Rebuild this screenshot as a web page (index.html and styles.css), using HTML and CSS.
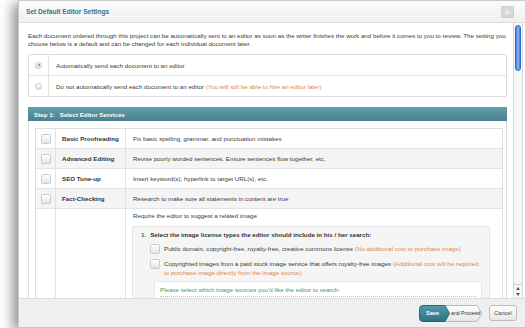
FILE: index.html
```html
<!DOCTYPE html>
<html>
<head>
    <title>Set Default Editor Settings</title>
    <meta charset="UTF-8">
    <link rel="stylesheet" href="styles.css">
</head>
<body class="page">
    <div class="dialog">
        <div class="dialog-head">
            <span class="dialog-title">Set Default Editor Settings</span>
            <span class="close-btn">x</span>
        </div>

        <div class="dialog-body">
            <div class="scroll-content">
                <p class="intro">Each document ordered through this project can be automatically sent to an editor as soon as the writer finishes the work and before it comes to you to review. The setting you choose below is a default and can be changed for each individual document later.</p>

                <div class="radio-box">
                    <div class="radio-row">
                        <div class="radio-cell"><span class="radio checked"></span></div>
                        <div class="radio-label"><span>Automatically send each document to an editor</span></div>
                    </div>
                    <div class="radio-row">
                        <div class="radio-cell"><span class="radio"></span></div>
                        <div class="radio-label"><span>Do not automatically send each document to an editor <span class="note">(You will still be able to hire an editor later)</span></span></div>
                    </div>
                </div>

                <div class="step-bar">Step 1:&nbsp;&nbsp; Select Editor Services</div>
                <div class="step-body">
                    <div class="services">
                        <div class="service">
                            <div class="check-cell"><span class="checkbox"></span></div>
                            <div class="service-name">Basic Proofreading</div>
                            <div class="service-desc">Fix basic spelling, grammar, and punctuation mistakes</div>
                        </div>
                        <div class="service alt">
                            <div class="check-cell"><span class="checkbox"></span></div>
                            <div class="service-name">Advanced Editing</div>
                            <div class="service-desc">Revise poorly worded sentences. Ensure sentences flow together, etc.</div>
                        </div>
                        <div class="service">
                            <div class="check-cell"><span class="checkbox"></span></div>
                            <div class="service-name">SEO Tune-up</div>
                            <div class="service-desc">Insert keyword(s), hyperlink to target URL(s), etc.</div>
                        </div>
                        <div class="service alt">
                            <div class="check-cell"><span class="checkbox"></span></div>
                            <div class="service-name">Fact-Checking</div>
                            <div class="service-desc">Research to make sure all statements in content are true</div>
                        </div>
                        <div class="service tall">
                            <div class="check-cell"></div>
                            <div class="service-name"></div>
                            <div class="service-desc">
                                <div class="image-title">Require the editor to suggest a related image</div>
                                <div class="license-box">
                                    <div class="license-head"><span class="num">1.</span>Select the image license types the editor should include in his / her search:</div>
                                    <div class="license-opt">
                                        <span class="checkbox"></span>
                                        <span>Public domain, copyright-free, royalty-free, creative commons license <span class="note">(No additional cost to purchase image)</span></span>
                                    </div>
                                    <div class="license-opt">
                                        <span class="checkbox"></span>
                                        <span>Copyrighted images from a paid stock image service that offers royalty-free images <span class="note">(Additional cost will be required to purchase image directly from the image source)</span></span>
                                    </div>
                                    <div class="source-box">
                                        <div class="source-title">Please select which image sources you'd like the editor to search:</div>
                                    </div>
                                </div>
                            </div>
                        </div>
                    </div>
                </div>
            </div>

            <div class="scrollbar">
                <div class="thumb"></div>
                <div class="track"></div>
                <div class="arrows">
                    <span class="arrow up"></span>
                    <span class="arrow down"></span>
                </div>
            </div>
        </div>

        <div class="dialog-foot">
            <div class="proceed-btn">
                <svg class="proceed-shape" width="64" height="17" viewBox="0 0 64 17">
                    <defs>
                        <linearGradient id="lightGrad" x1="0" y1="0" x2="0" y2="1">
                            <stop offset="0" stop-color="#ffffff"/>
                            <stop offset="1" stop-color="#e4e4e4"/>
                        </linearGradient>
                        <linearGradient id="tealGrad" x1="0" y1="0" x2="0" y2="1">
                            <stop offset="0" stop-color="#4f9bab"/>
                            <stop offset="1" stop-color="#2d7283"/>
                        </linearGradient>
                    </defs>
                    <path d="M20 0.5 H58 L63 8.5 L58 16.5 H20 Z" fill="url(#lightGrad)" stroke="#b9b9b9"/>
                    <path d="M4 0.5 H26 L30.5 8.5 L26 16.5 H4 Q0.5 16.5 0.5 13 V4 Q0.5 0.5 4 0.5 Z" fill="url(#tealGrad)" stroke="#2a6676"/>
                </svg>
                <span class="save-label">Save</span>
                <span class="proceed-label">and Proceed</span>
            </div>
            <button class="cancel-btn">Cancel</button>
        </div>
    </div>
</body>
</html>
```

FILE: styles.css
```css
.page{
margin: 0;
background: #ffffff;
font-family: "Liberation Sans", Arial, sans-serif;
font-size: 6.2px;
color: #3a3a3a;
overflow: hidden;
height: 328px;
}

.dialog{
margin-left: 18px;
width: 506px;
height: 326px;
border: 1px solid #c9c9c9;
background: #fff;
box-shadow: -5px 3px 12px rgba(0,0,0,0.45);
display: flex;
flex-direction: column;
}

.dialog-head{
height: 21px;
flex: none;
display: flex;
align-items: center;
justify-content: space-between;
padding: 0 11px 0 7px;
background: linear-gradient(#fbfbfb, #f0f0f0);
border-bottom: 1px solid #dedede;
}

.dialog-title{
color: #2f7690;
font-weight: bold;
font-size: 6.6px;
}

.close-btn{
width: 11px;
height: 10px;
background: #d8d8d8;
border: 1px solid #cfcfcf;
border-radius: 1px;
color: #fff;
font-size: 6px;
font-weight: bold;
display: flex;
align-items: center;
justify-content: center;
}

.dialog-body{
flex: 1;
display: flex;
overflow: hidden;
}

.scroll-content{
flex: 1;
padding: 9px 6px 0 9px;
overflow: hidden;
}

.intro{
margin: 0;
line-height: 8px;
}

.radio-box{
margin-top: 6px;
border: 1px solid #dcdcdc;
border-radius: 2px;
}

.radio-row{
display: flex;
height: 20px;
}

.radio-row + .radio-row{
border-top: 1px solid #e2e2e2;
}

.radio-cell{
width: 19px;
border-right: 1px solid #e2e2e2;
display: flex;
align-items: center;
justify-content: center;
}

.radio{
width: 5px;
height: 5px;
border-radius: 50%;
border: 1px solid #c4c4c4;
background: linear-gradient(#fff, #e6e6e6);
position: relative;
}

.radio.checked::after{
content: "";
position: absolute;
left: 1.5px;
top: 1.5px;
width: 2px;
height: 2px;
border-radius: 50%;
background: #3a9a72;
}

.radio-label{
flex: 1;
display: flex;
align-items: center;
padding-left: 7px;
}

.note{
color: #d98a47;
}

.step-bar{
margin-top: 10px;
height: 14px;
display: flex;
align-items: center;
padding-left: 6px;
color: #fff;
font-weight: bold;
background: linear-gradient(#629fac, #4b808d);
}

.step-body{
border-left: 1px solid #dedede;
border-right: 1px solid #dedede;
padding: 7px 3px 0 6px;
}

.services{
border: 1px solid #dedede;
border-bottom: none;
}

.service{
display: flex;
height: 19px;
border-bottom: 1px solid #e4e4e4;
}

.service.alt{
background: #f4f4f4;
}

.service.tall{
height: 200px;
}

.check-cell{
width: 19px;
flex: none;
border-right: 1px solid #e2e2e2;
display: flex;
align-items: center;
justify-content: center;
}

.checkbox{
width: 8px;
height: 8px;
flex: none;
border: 1px solid #cbcbcb;
border-radius: 1.5px;
background: linear-gradient(#ffffff, #e4e4e4);
}

.service-name{
width: 63px;
flex: none;
padding-left: 6px;
display: flex;
align-items: center;
font-weight: bold;
color: #333;
border-right: 1px solid #e2e2e2;
}

.service-desc{
flex: 1;
padding-left: 7px;
display: flex;
align-items: center;
}

.service.tall .service-desc{
display: block;
padding: 3px 12px 0 6px;
}

.image-title{
line-height: 8px;
padding-left: 1px;
}

.license-box{
margin-top: 6px;
background: #f5f5f5;
border: 1px solid #e6e6e6;
border-radius: 2px;
padding: 4px 7px 0 8px;
}

.license-head{
font-weight: bold;
color: #333;
line-height: 8px;
}

.num{
color: #2f7690;
margin-right: 4px;
}

.license-opt{
display: flex;
gap: 4px;
margin-top: 5px;
padding-left: 9px;
line-height: 9px;
}

.source-box{
margin: 4px 0 0 13px;
background: #fff;
border: 1px solid #e8e8e8;
border-radius: 2px;
padding: 4px 5px 20px;
}

.source-title{
color: #3f9a6c;
padding-bottom: 3px;
border-bottom: 1px dotted #bfbfbf;
}

.scrollbar{
width: 8px;
flex: none;
margin-right: 2px;
border-left: 1px solid #d9d9d9;
border-right: 1px solid #d9d9d9;
background: #f6f6f6;
display: flex;
flex-direction: column;
}

.thumb{
height: 44px;
margin: 2px 1px 0;
border-radius: 3px;
background: linear-gradient(90deg, #3b7ee0, #8fbaf4 50%, #3b7ee0);
border: 1px solid #2f69c0;
}

.track{
flex: 1;
}

.arrows{
height: 13px;
border-top: 1px solid #d0d0d0;
display: flex;
flex-direction: column;
align-items: center;
justify-content: space-evenly;
}

.arrow{
width: 0;
height: 0;
border-left: 2px solid transparent;
border-right: 2px solid transparent;
}

.arrow.up{
border-bottom: 3px solid #555;
}

.arrow.down{
border-top: 3px solid #555;
}

.dialog-foot{
height: 28px;
flex: none;
background: #efefef;
border-top: 1px solid #dcdcdc;
display: flex;
align-items: center;
justify-content: flex-end;
gap: 6px;
padding-right: 8px;
}

.proceed-btn{
position: relative;
width: 64px;
height: 17px;
display: flex;
align-items: center;
}

.proceed-shape{
position: absolute;
left: 0;
top: 0;
}

.save-label{
position: relative;
width: 27px;
text-align: center;
color: #fff;
font-weight: bold;
font-size: 5.6px;
}

.proceed-label{
position: relative;
margin-left: 5px;
font-size: 5.2px;
color: #333;
}

.cancel-btn{
height: 16px;
width: 28px;
padding: 0;
font-family: inherit;
font-size: 5.6px;
color: #444;
border: 1px solid #bdbdbd;
border-radius: 3px;
background: linear-gradient(#ffffff, #e6e6e6);
}
```
